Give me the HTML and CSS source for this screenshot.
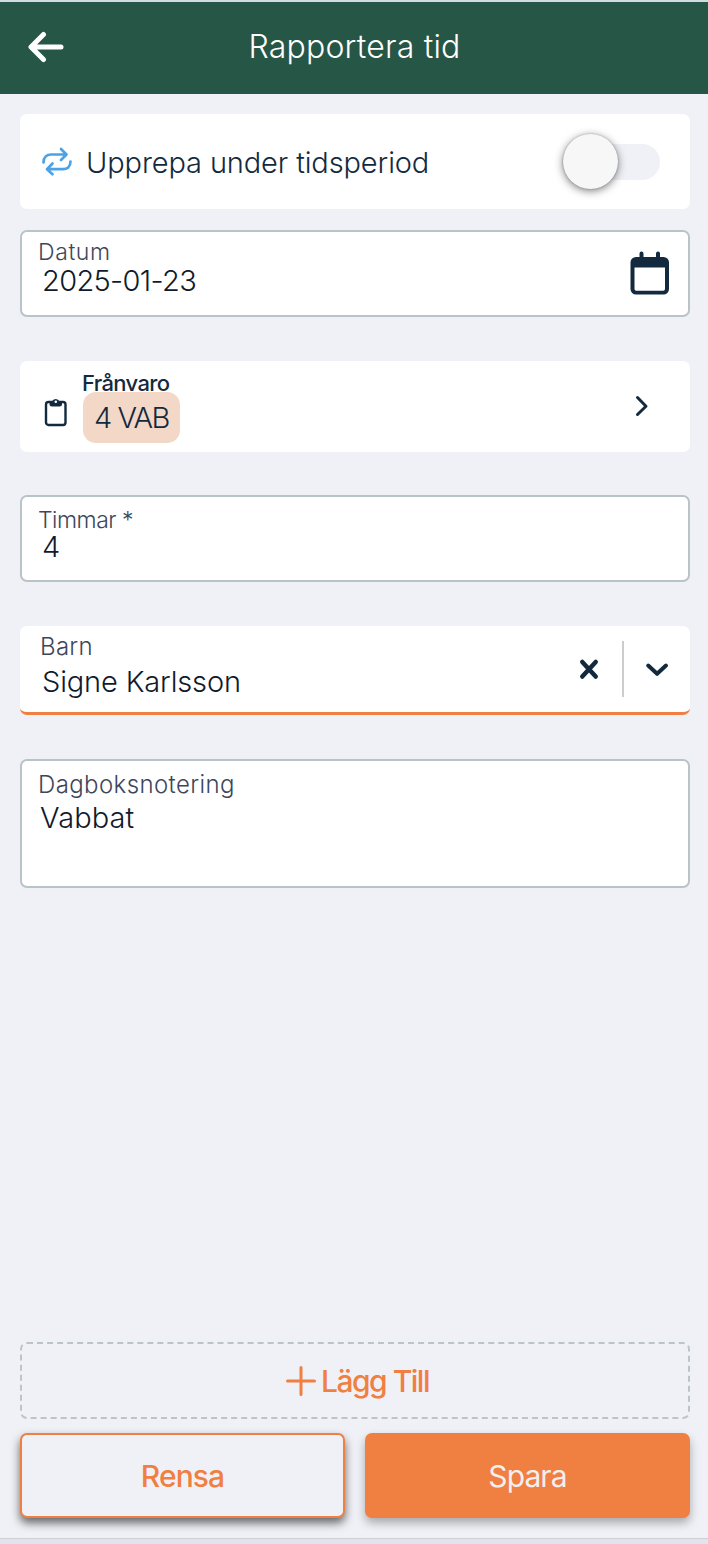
FILE: index.html
```html
<!DOCTYPE html>
<html lang="sv">
<head>
<meta charset="utf-8">
<title>Rapportera tid</title>
<link rel="stylesheet" href="styles.css">
</head>
<body>
<header class="topbar">
  <svg class="back" viewBox="0 0 36 32" width="36" height="32"><path d="M15.500 3.500 3 16l12.500 12.500M3.500 16H33" /></svg>
  <h1 class="title">Rapportera tid</h1>
</header>
<main class="form">
  <section class="card repeat">
    <svg class="repeat-icon" viewBox="0 0 30 30" width="30" height="30"><path d="M1.500 15.500C1.500 10 5 7.500 9 7.500H24M19 2l5.500 5.500L19 13M28.500 14.500C28.500 20 25 22.200 21 22.200H5M10.500 16.500 5 22.200l5.500 5"/></svg>
    <span class="text repeat-text">Upprepa under tidsperiod</span>
    <span class="switch"><span class="knob"></span></span>
  </section>
  <section class="field date">
    <div class="lines"><label class="label datum">Datum</label><span class="text value date-value">2025-01-23</span></div>
    <svg class="calendar" viewBox="0 0 40 44" width="40" height="44"><path class="solid" d="M6 6H9.500V2.500a2 2 0 0 1 4 0V6H26V2.500a2 2 0 0 1 4 0V6H33.500a5.500 5.500 0 0 1 5.500 5.500V38a5.500 5.500 0 0 1-5.500 5.500H6A5.500 5.500 0 0 1 .5 38V11.500A5.500 5.500 0 0 1 6 6ZM4.500 16.500V38a1.700 1.700 0 0 0 1.700 1.700H33.300A1.700 1.700 0 0 0 35 38V16.500Z" fill-rule="evenodd"/></svg>
  </section>
  <section class="card absence">
    <svg class="clipboard" viewBox="0 0 24 30" width="24" height="30"><rect x="2" y="5" width="19.500" height="23" rx="2.500"/><path class="solid" d="M5.500 4.500H8a4 4 0 0 1 7.500 0H18V7a2.500 2.500 0 0 1-2.500 2.500H8A2.500 2.500 0 0 1 5.500 7Z"/><circle cx="11.800" cy="4.800" r="1.300" class="hole"/></svg>
    <div class="absence-body"><span class="absence-label">Frånvaro</span><span class="badge"><span class="text vab">4 VAB</span></span></div>
    <svg class="chevron" viewBox="0 0 14 22" width="14" height="22"><path d="m2.500 2.500 8.500 8.700-8.500 8.300"/></svg>
  </section>
  <section class="field hours">
    <div class="lines"><label class="label timmar">Timmar *</label><span class="text value hours-value">4</span></div>
  </section>
  <section class="card child">
    <div class="lines"><label class="label barn">Barn</label><span class="text value child-value">Signe Karlsson</span></div>
    <svg class="clear" viewBox="0 0 20 22" width="20" height="22"><path d="m3.300 4 13.400 14.500M16.700 4 3.300 18.500"/></svg>
    <span class="divider"></span>
    <svg class="down" viewBox="0 0 24 16" width="24" height="16"><path d="m3.200 3.500 8.900 8.300 8.900-8.300"/></svg>
  </section>
  <section class="field diary">
    <div class="lines"><label class="label dagbok">Dagboksnotering</label><span class="text value diary-value">Vabbat</span></div>
  </section>
</main>
<footer class="actions">
  <button class="add"><svg viewBox="0 0 30 30" width="30" height="30"><path d="M15 1.500v27M1.500 15h27"/></svg><span class="add-text">Lägg Till</span></button>
  <div class="row"><button class="btn clear-btn"><span class="rensa">Rensa</span></button><button class="btn save-btn"><span class="spara">Spara</span></button></div>
</footer>
<div class="bottom-edge"></div>
</body>
</html>
```
FILE: styles.css
```css
* { box-sizing: border-box; }
body {
  margin: 0; height: 1544px; display: flex; flex-direction: column;
  background: #f0f1f6; color: #132a3e; overflow: hidden;
  font-family: Inter, "Open Sans", sans-serif; font-weight: 300;
}
svg { display: block; flex: none; fill: none; stroke: #132a3e; stroke-linecap: round; stroke-linejoin: round; }
.solid { fill: #132a3e; stroke: none; }
.hole { fill: #fff; stroke: none; }
.topbar {
  height: 94px; border-top: 2px solid #d3dce1; background: #265646;
  display: grid; grid-template-columns: 90px 1fr 90px; align-items: center; flex: none;
}
.back { margin-left: 28px; stroke: #fff; stroke-width: 5; margin-top: -2px; }
.title { margin: -2px 0 0 1px; font-size: 32px; line-height: 40px; font-weight: 300; letter-spacing: .2px; color: #fff; text-align: center; white-space: nowrap; }
.form { flex: 1; padding: 20px 18px 0 20px; display: flex; flex-direction: column; }
.text { font-size: 29px; white-space: nowrap; }
.card, .field { background: #fff; border-radius: 7px; display: flex; flex: none; }
.field { border: 2px solid #b9c4c9; }
.lines { display: flex; flex-direction: column; flex: 1; align-items: flex-start; }
.label { font-size: 23px; color: #3e465a; white-space: nowrap; }
.value { color: #101a2c; }
.repeat { height: 95px; align-items: center; padding: 0 30px 0 22px; }
.repeat-icon { stroke: #4aa3e8; stroke-width: 2.700; }
.repeat-text { flex: 1; margin-left: 14px; line-height: 40px; margin-top: 2px; letter-spacing: -.12px; }
.switch { width: 98px; height: 36px; border-radius: 18px; background: #f0f1f6; display: flex; align-items: center; }
.knob { width: 55px; height: 55px; border-radius: 50%; background: #f7f7f7; margin-left: 1px; flex: none; box-shadow: 0 2px 8px rgba(0,0,0,.5), 0 0 2px rgba(0,0,0,.25); }
.date { height: 87px; margin-top: 21px; padding: 9px 18px 0 16px; }
.datum { line-height: 22px; letter-spacing: .6px; }
.date-value { line-height: 36px; margin-left: 4px; letter-spacing: -.65px; }
.calendar { margin-top: 10px; }
.absence { height: 91px; margin-top: 44px; padding: 12px 41px 0 24px; }
.clipboard { stroke-width: 2.400; margin-top: 24px; }
.absence-body { flex: 1; display: flex; flex-direction: column; align-items: flex-start; margin-left: 14px; }
.absence-label { font-size: 22px; font-weight: 500; line-height: 20px; letter-spacing: -.65px; white-space: nowrap; }
.badge { width: 97px; height: 51px; margin: -1px 0 0 1px; border-radius: 13px; background: #f4d8c7; display: flex; align-items: center; justify-content: center; }
.vab { letter-spacing: -1.500px; }
.chevron { stroke-width: 3; margin-top: 22px; }
.hours { height: 87px; margin-top: 43px; padding: 13px 18px 0 16px; }
.timmar { line-height: 20px; letter-spacing: -.5px; }
.hours-value { line-height: 34px; margin-left: 4px; }
.child { height: 89px; margin-top: 44px; padding: 8px 21px 0 20px; border-bottom: 3px solid #f07f42; }
.barn { line-height: 25px; font-size: 24px; letter-spacing: .3px; }
.child-value { line-height: 45px; margin-left: 2px; letter-spacing: -.15px; }
.clear { stroke-width: 4.500; margin-top: 24px; }
.divider { width: 2px; height: 56px; background: #ccc; margin: 7px 21px 0 23px; }
.down { stroke-width: 4; margin-top: 28px; }
.diary { height: 129px; margin-top: 44px; padding: 11px 16px 0; }
.dagbok { line-height: 26px; font-size: 24px; letter-spacing: .4px; }
.diary-value { line-height: 40px; margin-left: 2px; letter-spacing: .1px; }
.actions { padding: 0 18px 20px 20px; flex: none; }
button { font: 500 30px Inter, sans-serif; padding: 0; margin: 0; border-radius: 7px; display: flex; align-items: center; justify-content: center; white-space: nowrap; }
.add { width: 100%; height: 77px; border: 2px dashed #bbc5c9; background: transparent; color: #f07f42; }
.add svg { stroke: #f07f42; stroke-width: 3; margin-left: 5px; }
.add-text { margin-left: 5px; letter-spacing: -1.500px; }
.row { display: grid; grid-template-columns: 1fr 1fr; gap: 20px; margin-top: 14px; }
.btn { height: 85px; letter-spacing: -.9px; }
.clear-btn { border: 2px solid #f07f42; background: #f0f1f6; color: #f07f42; box-shadow: 0 5px 10px rgba(0,0,0,.58); }
.save-btn { border: 0; background: #f07f42; color: #f3efee; box-shadow: 0 5px 10px rgba(0,0,0,.3); font-weight: 400; }
.bottom-edge { height: 6px; border-top: 1px solid #cfd0d3; background: #e2e3ec; flex: none; }
```
